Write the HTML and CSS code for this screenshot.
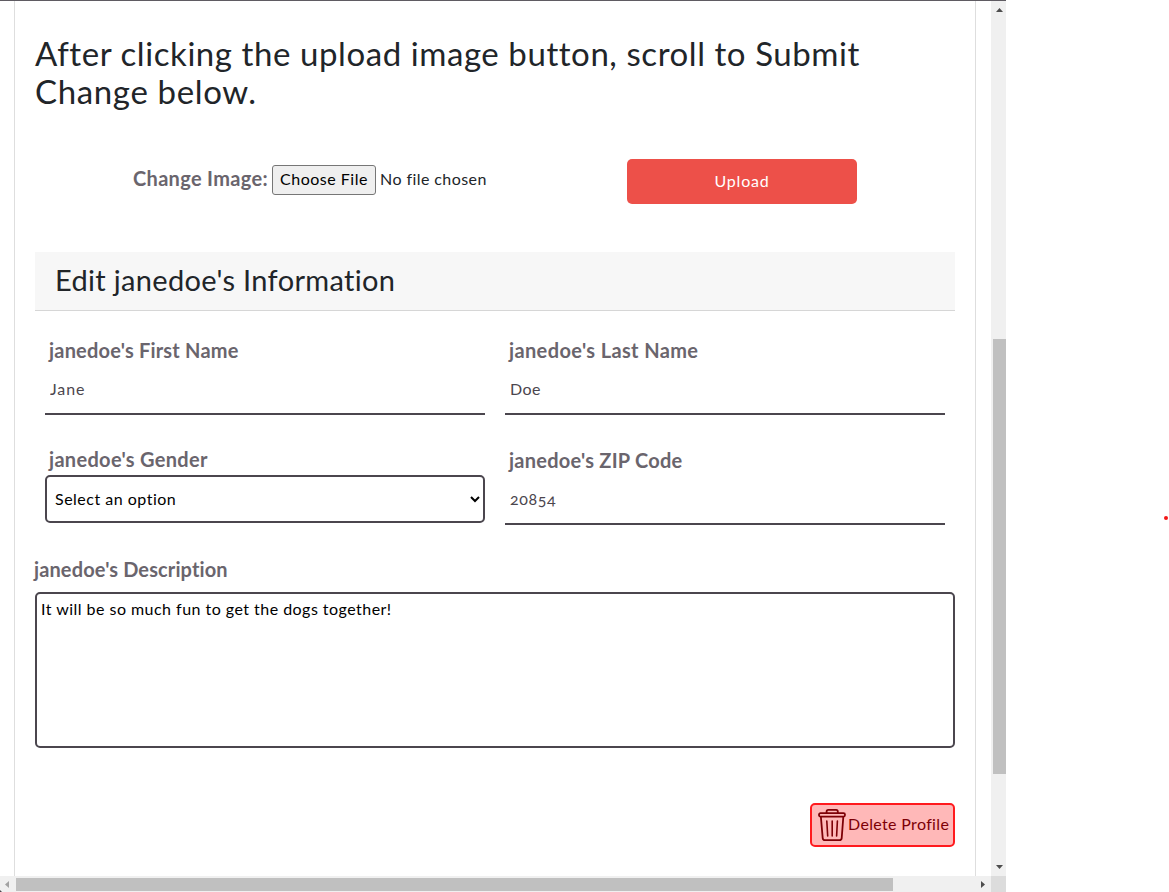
FILE: index.html
```
<!DOCTYPE html>
<html lang="en">
<head>
<meta charset="utf-8">
<title>Edit Profile</title>
<link rel="stylesheet" href="styles.css">
</head>
<body>
<div class="frame">
  <main class="viewport">
    <section class="card">
      <h2 class="notice"><span class="notice-first">After clicking the upload image button, scroll to Submit</span> <span class="notice-second">Change below.</span></h2>
      <form class="image-form">
        <div class="picker">
          <label class="label picker-label" for="image">Change Image:</label>
          <button class="choose" id="image" type="button">Choose File</button>
          <span class="file-state">No file chosen</span>
        </div>
        <button class="upload" type="button">Upload</button>
      </form>
      <h3 class="section-title"><span class="section-text">Edit janedoe's Information</span></h3>
      <form class="fields">
        <div class="field">
          <label class="label first-label" for="first">janedoe's First Name</label>
          <input class="line-input first" id="first" value="Jane">
        </div>
        <div class="field">
          <label class="label last-label" for="last">janedoe's Last Name</label>
          <input class="line-input" id="last" value="Doe">
        </div>
        <div class="field field-select">
          <label class="label gender-label" for="gender">janedoe's Gender</label>
          <select class="select" id="gender"><option>Select an option</option></select>
        </div>
        <div class="field">
          <label class="label zip-label" for="zip">janedoe's ZIP Code</label>
          <input class="line-input zip" id="zip" value="20854">
        </div>
      </form>
      <div class="description">
        <label class="label desc-label" for="desc">janedoe's Description</label>
        <textarea class="textarea" id="desc" spellcheck="false">It will be so much fun to get the dogs together!</textarea>
      </div>
      <div class="actions">
        <button class="delete" type="button">
          <svg class="trash" width="28" height="34" viewBox="0 0 28 34" fill="none" stroke="#7d0006" stroke-width="1.8" stroke-linecap="round" stroke-linejoin="round">
            <path d="M8.6 5V3.4Q8.6 1.8 10.2 1.8H18.2Q19.8 1.8 19.8 3.4V5"/>
            <rect x="1" y="5.2" width="26" height="3.4" rx="1.5"/>
            <path d="M2.9 9L4.7 30.2Q4.9 32.2 6.9 32.2H21.5Q23.5 32.2 23.7 30.2L25.3 9"/>
            <path d="M8.8 13L9.7 28M14.2 13V28M19.4 13L18.6 28" stroke-width="1.6"/>
          </svg>
          <span class="delete-text">Delete Profile</span>
        </button>
      </div>
    </section>
  </main>
  <div class="vbar">
    <svg class="arrow" width="15" height="17" viewBox="0 0 15 17"><path d="M8.5 7L12 11H5Z" fill="#4d4d4d"/></svg>
    <div class="vthumb"></div>
    <svg class="arrow" width="15" height="17" viewBox="0 0 15 17"><path d="M5 6H12L8.5 10Z" fill="#4d4d4d"/></svg>
  </div>
  <div class="hbar">
    <svg class="arrow" width="16" height="16" viewBox="0 0 16 16"><path d="M9 5V12L5 8.5Z" fill="#a3a3a3"/><path d="M0 14L2 16H0Z" fill="#4b464e"/></svg>
    <div class="hthumb"></div>
    <svg class="arrow" width="16" height="16" viewBox="0 0 16 16"><path d="M6 5V12L10 8.5Z" fill="#4d4d4d"/></svg>
  </div>
  <div class="corner"></div>
</div>
<div class="marker"></div>
</body>
</html>
```
FILE: styles.css
```
* { box-sizing: border-box; }
body { margin: 0; width: 1169px; height: 892px; overflow: hidden; background: #fff; font-family: Lato, sans-serif; font-size: 16px; color: #212529; position: relative; }
button, input, select, textarea { font: inherit; }
.frame { width: 1006px; height: 892px; display: grid; grid-template-columns: 991px 15px; grid-template-rows: 875px 16px; border-top: 1px solid #5f5b62; }
.viewport { padding: 0 15px 0 14px; background: #fff; overflow: hidden; }
.card { width: 962px; height: 875px; padding: 33px 20px 0; border: solid #dedede; border-width: 0 1px; }
.notice { margin: 0; font-size: 33px; font-weight: 400; line-height: 38.4px; white-space: nowrap; }
.notice-first, .notice-second { display: block; width: max-content; }
.notice-first { letter-spacing: 0.57px; }
.notice-second { letter-spacing: 0.65px; }
.image-form { display: flex; margin-top: 48px; height: 45px; }
.picker { width: 592px; padding: 6px 0 0 98px; display: flex; align-items: flex-start; }
.label { font-size: 20px; font-weight: 700; line-height: 24px; color: #6a656d; width: max-content; white-space: nowrap; }
.picker .picker-label { width: 139px; line-height: 27px; letter-spacing: 0.32px; }
.first-label { letter-spacing: 0.2px; }
.last-label { letter-spacing: 0.37px; }
.gender-label { letter-spacing: 0.31px; }
.zip-label { letter-spacing: 0.24px; }
.choose { width: 104px; height: 30px; padding: 0 0 2px; border: 1px solid #767676; border-radius: 3px; background: #efefef; color: #000; white-space: nowrap; letter-spacing: 0.5px; }
.file-state { margin-left: 4px; line-height: 28px; white-space: nowrap; letter-spacing: 0.42px; }
.upload { width: 230px; height: 45px; padding: 0 0 2px; border: 0; border-radius: 5px; background: #ed5049; color: #fff; letter-spacing: 0.8px; }
.section-title { margin: 48px 0 0; height: 59px; padding: 11px 20px; background: #f7f7f7; border-bottom: 1px solid #d6d6d6; font-size: 29px; font-weight: 400; line-height: 34px; white-space: nowrap; letter-spacing: 0.33px; }
.fields { display: grid; grid-template-columns: 440px 440px; column-gap: 20px; row-gap: 10px; padding: 26px 10px 0; }
.field { display: flex; flex-direction: column; height: 100px; padding-top: 1px; }
.field .label { margin-left: 4px; }
.line-input { width: 440px; height: 52px; margin-top: 1px; padding: 2px 5px 0; border: 0; border-bottom: 2px solid #4b464e; background: #fff; color: #4b464e; outline: 0; letter-spacing: 0.4px; }
.first { letter-spacing: 0.9px; }
.zip { font-variant-numeric: oldstyle-nums; letter-spacing: 0.6px; }
.field-select { padding-top: 0; }
.select { width: 440px; height: 48px; margin-top: 4px; padding: 0 4px; border: 2px solid #4b464e; border-radius: 5px; background: #fff; color: #000; letter-spacing: 0.5px; }
.description { display: flex; flex-direction: column; margin-top: 10px; }
.desc-label { margin-left: -1px; letter-spacing: 0.12px; }
.textarea { display: block; width: 920px; height: 156px; margin-top: 11px; padding: 5px 4px; line-height: 20px; border: 2px solid #4b464e; border-radius: 5px; resize: none; color: #000; outline: 0; letter-spacing: 0.47px; }
.actions { display: flex; justify-content: flex-end; margin-top: 55px; }
.delete { display: flex; align-items: center; width: 145px; height: 44px; padding: 0 0 0 6px; border: 2px solid #ff1a1e; border-radius: 5px; background: #ffb8b8; color: #7d0006; gap: 2px; white-space: nowrap; }
.delete-text { padding-bottom: 2px; letter-spacing: 0.34px; }
.trash { display: block; flex: none; }
.vbar { background: #f0f0f0; display: flex; flex-direction: column; }
.vthumb { width: 13px; height: 435px; margin: 321px 0 auto 2px; background: #c0c0c0; }
.hbar { background: #f0f0f0; display: flex; }
.hthumb { width: 877px; height: 13px; margin: 2px auto 0 0; background: #c0c0c0; }
.arrow { display: block; flex: none; }
.corner { background: #dcdcdc; }
.marker { position: absolute; left: 1164px; top: 516px; width: 4px; height: 4px; border-radius: 2px; background: #f31515; }
```
